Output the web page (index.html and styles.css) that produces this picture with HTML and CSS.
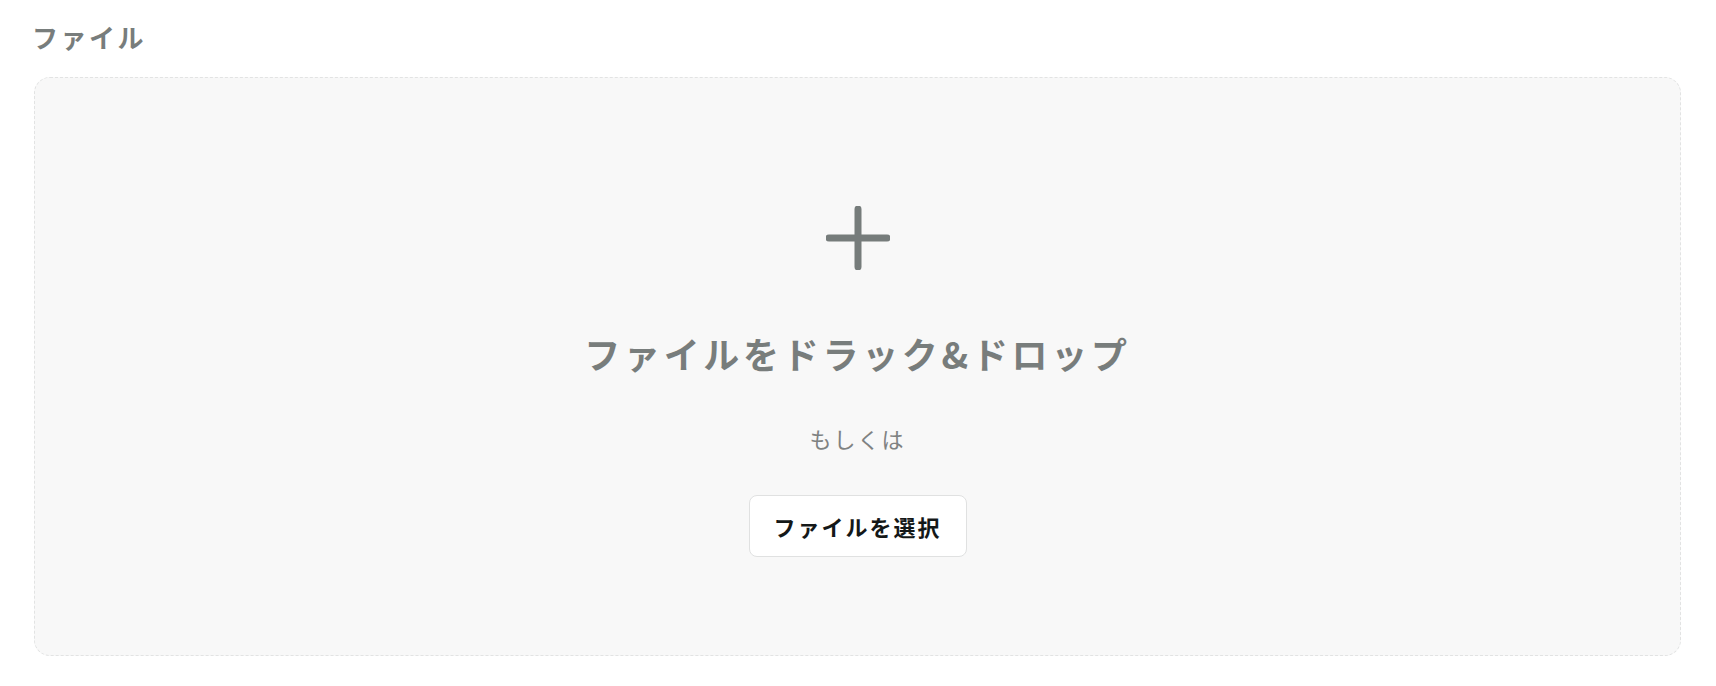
FILE: index.html
```html
<!DOCTYPE html>
<html lang="ja">
<head>
<meta charset="utf-8">
<title>ファイル</title>
<link rel="stylesheet" href="styles.css">
</head>
<body>
<div class="field">
  <div class="label">ファイル</div>
  <div class="dropzone">
    <svg class="plus" width="64" height="64" viewBox="0 0 64 64" aria-hidden="true">
      <path d="M32 3V61M3 32H61" stroke="#767c7b" stroke-width="7" stroke-linecap="round" fill="none"/>
    </svg>
    <div class="title">ファイルをドラック&amp;ドロップ</div>
    <div class="or">もしくは</div>
    <button class="select" type="button">ファイルを選択</button>
  </div>
</div>
</body>
</html>
```
FILE: styles.css
```css
html, body {
  margin: 0;
  padding: 0;
  background: #ffffff;
}
body {
  font-family: "Noto Sans CJK JP", "Noto Sans", sans-serif;
}
.field {
  padding: 18px 35px 0 34px;
}
.label {
  font-size: 26px;
  line-height: 38px;
  font-weight: 700;
  color: #787d7c;
  letter-spacing: 2.5px;
  margin: 0 0 21px -2px;
}
.dropzone {
  box-sizing: border-box;
  height: 579px;
  border: 1.5px dashed #e2e3e3;
  border-radius: 16px;
  background: #f8f8f8;
  display: flex;
  flex-direction: column;
  align-items: center;
  padding-top: 128px;
}
.plus {
  display: block;
}
.title {
  margin-top: 56px;
  font-size: 36px;
  line-height: 54px;
  font-weight: 700;
  color: #787d7c;
  letter-spacing: 3.7px;
}
.or {
  margin-top: 42px;
  font-size: 22px;
  line-height: 33px;
  font-weight: 400;
  color: #7f8282;
  letter-spacing: 2px;
}
.select {
  margin-top: 40px;
  width: 218px;
  height: 62px;
  box-sizing: border-box;
  background: #ffffff;
  border: 1.5px solid #e0e1e1;
  border-radius: 8px;
  font-family: "Noto Sans CJK JP", "Noto Sans", sans-serif;
  font-size: 22px;
  font-weight: 700;
  color: #141818;
  letter-spacing: 2px;
  padding: 0;
  cursor: pointer;
}
```
